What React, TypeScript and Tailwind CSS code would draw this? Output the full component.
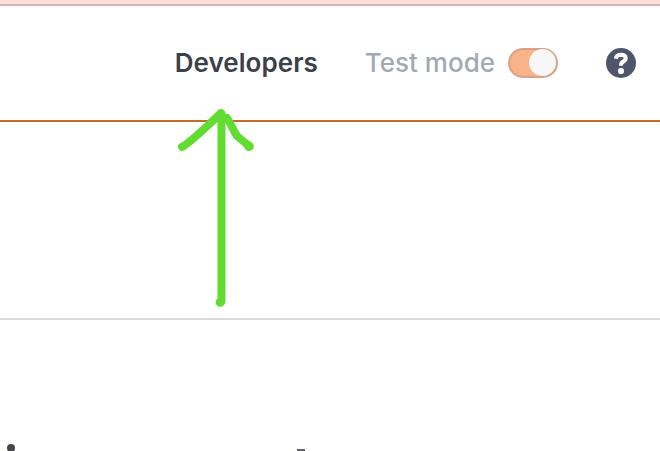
import { useState } from "react";

const HelpIcon = () => (
  <svg viewBox="0 0 30 30" className="block h-[30px] w-[30px]">
    <circle cx="15" cy="15" r="15" fill="#4f566b" />
    <path
      d="M9.8 10.8C10.2 8 12.1 6.8 15 6.8c3 0 4.7 1.3 4.7 3.5 0 1.8-1.1 2.6-2.5 3.3-1.6.8-2.2 1.5-2.2 4.1"
      fill="none"
      stroke="#fff"
      strokeWidth="4"
    />
    <circle cx="15" cy="23" r="3.1" fill="#fff" />
  </svg>
);

const Arrow = () => (
  <svg
    viewBox="0 0 80 202"
    className="pointer-events-none absolute left-[176px] top-[107px] h-[202px] w-[80px]"
    fill="none"
    stroke="#62dc30"
    strokeWidth="8"
    strokeLinecap="round"
    strokeLinejoin="round"
  >
    <path d="M45.5 7V194" />
    <path d="M6 40C16 34 28 22 45 6" />
    <path d="M51 11C55 17 57 23 61 29L73 39" />
    <circle cx="44.3" cy="195.3" r="4.6" fill="#62dc30" stroke="none" />
    <circle cx="73" cy="39.3" r="4.8" fill="#62dc30" stroke="none" />
  </svg>
);

export default function App() {
  const [testMode, setTestMode] = useState(true);

  return (
    <div className="relative h-[451px] w-full overflow-hidden bg-white font-['Inter',sans-serif]">
      {/* Banner edge */}
      <div className="h-[6px] border-b-2 border-[#d0b5b0] bg-[#f9dfd8]" />

      {/* Top bar */}
      <header className="flex h-[116px] items-center justify-end border-b-2 border-[#c46c2c] pr-[24px]">
        <nav className="flex items-center">
          <a className="mr-[47px] text-[26px] font-semibold leading-8 tracking-[0.04px] text-[#3c4048]">
            Developers
          </a>
          <span className="mr-[13px] text-[26px] font-medium leading-8 text-[#a3a9b3]">
            Test mode
          </span>
          <button
            role="switch"
            aria-checked={testMode}
            aria-label="Test mode"
            onClick={() => setTestMode(!testMode)}
            className={`mb-px mr-[48px] flex h-[30px] w-[50px] items-center rounded-full border-2 border-[#d5a28a] bg-[#fab389] ${
              testMode ? "justify-end" : "justify-start"
            }`}
          >
            <span className="h-[27px] w-[27px] shrink-0 rounded-full bg-[#f7f7f8]" />
          </button>
          <HelpIcon />
        </nav>
      </header>

      {/* Empty row */}
      <div className="h-[198px] border-b-2 border-[#d9dadc]" />

      {/* Tops of the heading's tall letters, cut off by the fold */}
      <div className="flex h-[131px] items-end pl-[7px]">
        <span className="-mb-px h-[8px] w-[8px] rounded-full bg-[#45464b]" />
        <span className="ml-[282px] h-[2px] w-[8px] bg-[#626368]" />
      </div>

      <Arrow />
    </div>
  );
}
